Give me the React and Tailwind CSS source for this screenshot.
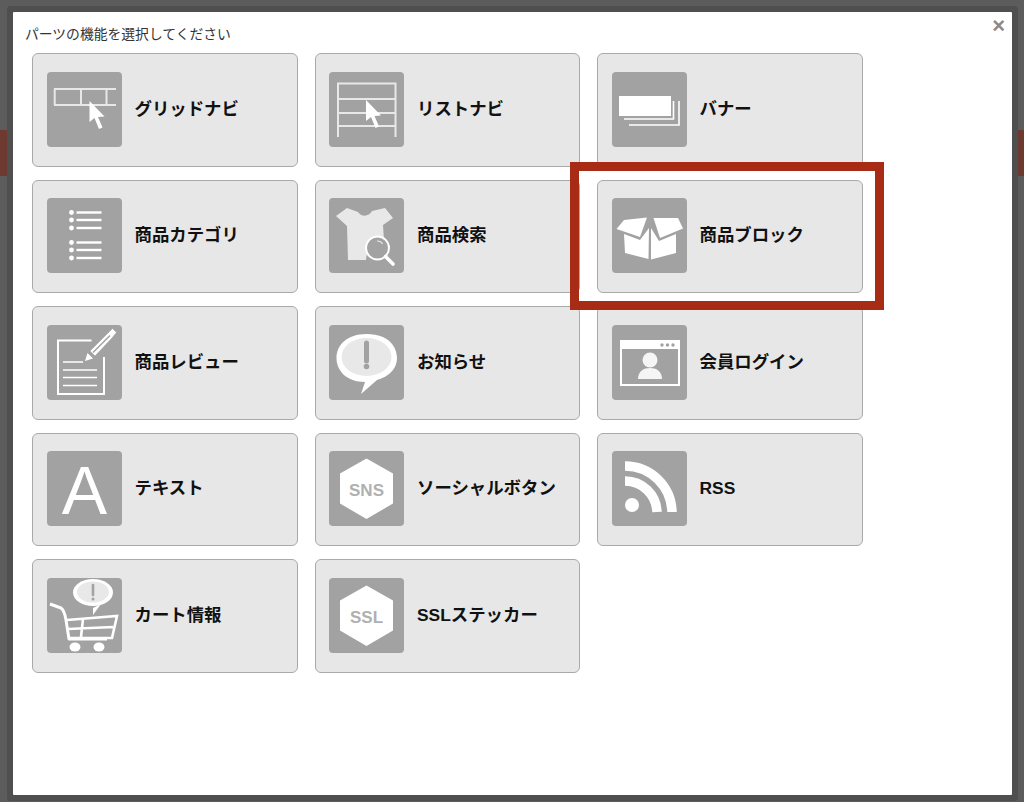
const cards = [
  { label: 'グリッドナビ', icon: <GridIcon /> },
  { label: 'リストナビ', icon: <ListNavIcon /> },
  { label: 'バナー', icon: <BannerIcon /> },
  { label: '商品カテゴリ', icon: <CategoryIcon /> },
  { label: '商品検索', icon: <SearchIcon /> },
  { label: '商品ブロック', icon: <BoxIcon /> },
  { label: '商品レビュー', icon: <ReviewIcon /> },
  { label: 'お知らせ', icon: <NoticeIcon /> },
  { label: '会員ログイン', icon: <LoginIcon /> },
  { label: 'テキスト', icon: <TextIcon /> },
  { label: 'ソーシャルボタン', icon: <HexIcon text="SNS" /> },
  { label: 'RSS', icon: <RssIcon /> },
  { label: 'カート情報', icon: <CartIcon /> },
  { label: 'SSLステッカー', icon: <HexIcon text="SSL" /> },
]

const svgClass = 'block w-[75px] h-[75px]'

function Cursor({ x, y }) {
  return (
    <path
      transform={`translate(${x} ${y})`}
      d="M0 0 L0 21 L5 17 L9.5 28 L13 26.5 L8.5 16 L15 15.5 Z"
      fill="#fff"
    />
  )
}

function GridIcon() {
  return (
    <svg viewBox="0 0 75 75" className={svgClass}>
      <path d="M7 17 H69 M7 33 H69 M7.7 17 V33 M34 17 V33 M59.5 17 V33" stroke="#e8e8e8" strokeWidth="2" fill="none" />
      <Cursor x={42.5} y={29} />
    </svg>
  )
}

function ListNavIcon() {
  return (
    <svg viewBox="0 0 75 75" className={svgClass}>
      <path d="M9 65 V11.5 H66.5 V65 M9 27 H66.5 M9 41 H66.5 M9 54 H66.5" stroke="#e8e8e8" strokeWidth="2" fill="none" />
      <Cursor x={37} y={28} />
    </svg>
  )
}

function BannerIcon() {
  return (
    <svg viewBox="0 0 75 75" className={svgClass}>
      <rect x="7" y="24" width="52" height="20" fill="#fff" />
      <path d="M61.5 29 V47 H12" stroke="#fff" strokeWidth="1.6" fill="none" />
      <path d="M67 29 V53 H17" stroke="#fff" strokeWidth="1.6" fill="none" />
    </svg>
  )
}

function CategoryIcon() {
  const rows = [14.5, 22, 30, 44.5, 52, 60]
  return (
    <svg viewBox="0 0 75 75" className={svgClass}>
      {rows.map((y) => (
        <g key={y} fill="#fff">
          <circle cx="24.5" cy={y} r="2.4" />
          <rect x="29.5" y={y - 1.2} width="25" height="2.4" />
        </g>
      ))}
    </svg>
  )
}

function SearchIcon() {
  return (
    <svg viewBox="0 0 75 75" className={svgClass}>
      <path
        d="M18 10 L29 14 C32 19 40 19 43 13 L56 10 L64 20 L54 27 L55 42 C48 42 38 48 37 62 L19 62 L18 28 L7 18 Z"
        fill="#e8e8e8"
      />
      <circle cx="48.5" cy="50" r="11.5" fill="#a2a2a2" stroke="#fff" strokeWidth="2" />
      <path d="M56.5 58.5 L64 66" stroke="#fff" strokeWidth="3.6" strokeLinecap="round" />
      <path d="M48 43 C50 43 52.5 44 53.5 46" stroke="#e8e8e8" strokeWidth="1.2" fill="none" />
    </svg>
  )
}

function BoxIcon() {
  return (
    <svg viewBox="0 0 75 75" className={svgClass} fill="#fff">
      <path d="M4.5 31 L12 22 L35 19.5 L28 39 Z" />
      <path d="M41.5 20 L66 20 L71 30.5 L48 40 Z" />
      <path d="M12 36 L28 42 L37 30 L36.5 61 L13 55 Z" />
      <path d="M39 30 L47 43 L64 36 V55 L39 61.5 Z" />
    </svg>
  )
}

function ReviewIcon() {
  return (
    <svg viewBox="0 0 75 75" className={svgClass}>
      <path d="M44.5 15.5 H11 V69 H57 V32" stroke="#fff" strokeWidth="2" fill="none" />
      <path d="M16 37 H36 M16 45 H50 M16 52.5 H50 M16 60.5 H50" stroke="#fff" strokeWidth="1.5" />
      <path d="M39 36 L46 17 L64 6 L68.5 12.5 L51 30 Z" fill="#a2a2a2" />
      <path d="M38 36 L40.5 28 L46 33.5 Z" fill="#fff" />
      <path d="M43 26 L60 9 L65.5 3.5 L69.5 7.5 L65 13 L48 31 Z" fill="#fff" stroke="#a2a2a2" strokeWidth="0.6" />
      <path d="M46 27.5 L63 10.5" stroke="#a2a2a2" strokeWidth="1.4" />
    </svg>
  )
}

function NoticeIcon() {
  return (
    <svg viewBox="0 0 75 75" className={svgClass}>
      <path d="M37.5 9 C62 9 68 24 68 33 C68 46 56 53 48 55 L32 69 L36 57 C18 57 7.5 46 7.5 33 C7.5 20 18 9 37.5 9 Z" fill="#fff" />
      <ellipse cx="37.5" cy="32" rx="25" ry="19" fill="#e8e8e8" />
      <path d="M37.5 18 V36" stroke="#a2a2a2" strokeWidth="5" strokeLinecap="round" />
      <circle cx="37.5" cy="41.5" r="2.8" fill="#a2a2a2" />
    </svg>
  )
}

function LoginIcon() {
  return (
    <svg viewBox="0 0 75 75" className={svgClass}>
      <rect x="9" y="16" width="58" height="44" fill="none" stroke="#fff" strokeWidth="2" />
      <rect x="9" y="16" width="58" height="8" fill="#fff" />
      <circle cx="50" cy="20" r="1.7" fill="#a2a2a2" />
      <circle cx="55.5" cy="20" r="1.7" fill="#a2a2a2" />
      <circle cx="61" cy="20" r="1.7" fill="#a2a2a2" />
      <circle cx="38" cy="35" r="7.5" fill="#f5f5f5" />
      <path d="M26 54 C26 46 32 43 38 43 C44 43 50 46 50 54 Z" fill="#f5f5f5" />
    </svg>
  )
}

function TextIcon() {
  return (
    <svg viewBox="0 0 75 75" className={svgClass}>
      <text x="37.5" y="62.5" textAnchor="middle" fill="#fff" className="text-[68px] font-['Liberation_Sans',sans-serif]">
        A
      </text>
    </svg>
  )
}

function HexIcon({ text }) {
  return (
    <svg viewBox="0 0 75 75" className={svgClass}>
      <path d="M37.5 7.5 L64 22.5 V52.5 L37.5 68 L11 52.5 V22.5 Z" fill="#fff" />
      <text x="37.5" y="44.5" textAnchor="middle" fill="#b0b0b0" className="text-[17px] font-bold font-['Liberation_Sans',sans-serif]">
        {text}
      </text>
    </svg>
  )
}

function RssIcon() {
  return (
    <svg viewBox="0 0 75 75" className={svgClass}>
      <circle cx="20" cy="54" r="7" fill="#fff" />
      <path d="M13 30 A 32 32 0 0 1 45 61" stroke="#fff" strokeWidth="9.5" fill="none" />
      <path d="M13 15 A 47 47 0 0 1 60 61" stroke="#fff" strokeWidth="9.5" fill="none" />
    </svg>
  )
}

function CartIcon() {
  return (
    <svg viewBox="0 0 75 75" className={svgClass}>
      <ellipse cx="46" cy="14.5" rx="20" ry="13.5" fill="#fff" />
      <ellipse cx="46" cy="14" rx="16" ry="10.5" fill="#e8e8e8" />
      <path d="M46 30 L54 26 L46 37 Z" fill="#fff" />
      <path d="M46 7 V17" stroke="#a2a2a2" strokeWidth="2.6" strokeLinecap="round" />
      <circle cx="46" cy="21" r="1.5" fill="#a2a2a2" />
      <path d="M3 26 L14 30 C17 32 18 36 19 42 L22 61 H60" stroke="#fff" strokeWidth="3" fill="none" strokeLinejoin="round" />
      <path d="M20 42 L70 38 L65 60 H22 M21 51 L66 49 M36 41 L34 59" stroke="#fff" strokeWidth="2.6" fill="none" />
      <ellipse cx="28" cy="69" rx="5.5" ry="4.5" fill="#fff" />
      <ellipse cx="52" cy="69" rx="5.5" ry="4.5" fill="#fff" />
    </svg>
  )
}

const Card = ({ label, icon }) => (
  <button className="flex items-center h-full pl-[13.5px] pb-[1px] rounded-[6px] border border-[#a9a9a9] bg-[#e7e7e7] text-left">
    <div className="w-[75px] h-[75px] rounded-[4px] bg-[#a2a2a2] overflow-hidden shrink-0">{icon}</div>
    <span className="ml-[13px] text-[17.4px] font-bold text-[#111] leading-none">{label}</span>
  </button>
)

export default function App() {
  return (
    <div className="relative w-[1024px] h-[802px] overflow-hidden bg-[#5c5c5c] font-['Liberation_Sans','Noto_Sans_CJK_JP',sans-serif]">
      {/* dimmed page behind the dialog */}
      <div className="absolute left-0 top-[130px] w-full h-[46px] bg-[#6e3a30]" />

      <div className="absolute left-[13px] top-[12px] w-[999px] h-[783px] bg-white shadow-[0_0_0_6px_#4f4f4f] rounded-[1px]">
        <div className="relative pt-[15px] pl-[12px] text-[13.8px] leading-[16px] text-[#333]">
          パーツの機能を選択してください
        </div>
        <button className="absolute right-[7px] top-[3px] text-[#8a8a8a] text-[22px] font-bold leading-none">×</button>
        <div className="mt-[10px] ml-[19px] grid grid-cols-[repeat(3,265.5px)] auto-rows-[113.5px] gap-x-[17px] gap-y-[13px]">
          {cards.map((c) => (
            <Card key={c.label} label={c.label} icon={c.icon} />
          ))}
        </div>
      </div>

      {/* highlight around the selected part */}
      <div className="absolute left-[570px] top-[162px] w-[314px] h-[148px] border-[9px] border-[#a82c15]" />
    </div>
  )
}
